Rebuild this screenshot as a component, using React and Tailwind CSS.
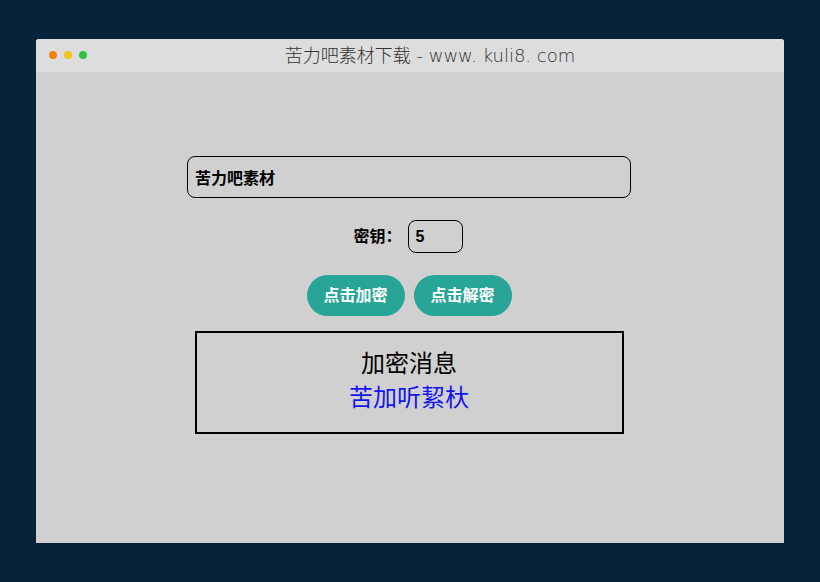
import React, { useState } from "react";

const App = () => {
  const [text, setText] = useState("苦力吧素材");
  const [key, setKey] = useState("5");

  const dots = ["bg-[#f57f17]", "bg-[#f0c419]", "bg-[#2fc23f]"];

  return (
    <div className="w-[820px] h-[582px] bg-[#06233a] pt-[39px] font-['Liberation_Sans','Noto_Sans_CJK_SC',sans-serif]">
      <div className="mx-auto w-[748px] h-[504px] bg-[#d0d0d0] rounded-t-[3px] overflow-hidden">
        {/* title bar */}
        <div className="relative h-[33px] bg-[#dddddd] flex items-center justify-center">
          <div className="absolute left-[13px] top-[12px] flex gap-[7px]">
            {dots.map((c, i) => (
              <span key={i} className={`w-2 h-2 rounded-full ${c}`}></span>
            ))}
          </div>
          <p className="ml-[40px] text-[18px] text-[#333] font-extralight font-['DejaVu_Sans','Noto_Sans_CJK_SC',sans-serif]">
            苦力吧素材下载 - www. kuli8. com
          </p>
        </div>

        <div className="flex flex-col items-center pt-[84px] pr-[2px]">
          <input
            value={text}
            onChange={(e) => setText(e.target.value)}
            className="w-[444px] h-[42px] border border-black rounded-[8px] px-[7px] text-[16px] font-bold text-black bg-transparent outline-none"
          />

          <div className="mt-[22px] mr-[2px] flex items-center">
            <span className="mr-[6px] text-[16px] font-bold text-black">密钥：</span>
            <input
              value={key}
              onChange={(e) => setKey(e.target.value)}
              className="w-[55px] h-[33px] border border-black rounded-[8px] px-[7px] text-[16px] font-bold text-black bg-transparent outline-none"
            />
          </div>

          <div className="mt-[22px] flex gap-[9px]">
            <button className="w-[98px] h-[41px] rounded-full bg-[#28a597] text-white text-[16px] font-bold">
              点击加密
            </button>
            <button className="w-[98px] h-[41px] rounded-full bg-[#28a597] text-white text-[16px] font-bold">
              点击解密
            </button>
          </div>

          <div className="mt-[15px] w-[429px] h-[103px] border-2 border-black flex flex-col items-center pt-[15px] font-['Liberation_Serif','Noto_Sans_CJK_SC',serif]">
            <p className="text-[24px] leading-8 text-black">加密消息</p>
            <p className="text-[24px] leading-[36px] text-[#1414ee]">苦加听絜杕</p>
          </div>
        </div>
      </div>
    </div>
  );
};

export default App;
